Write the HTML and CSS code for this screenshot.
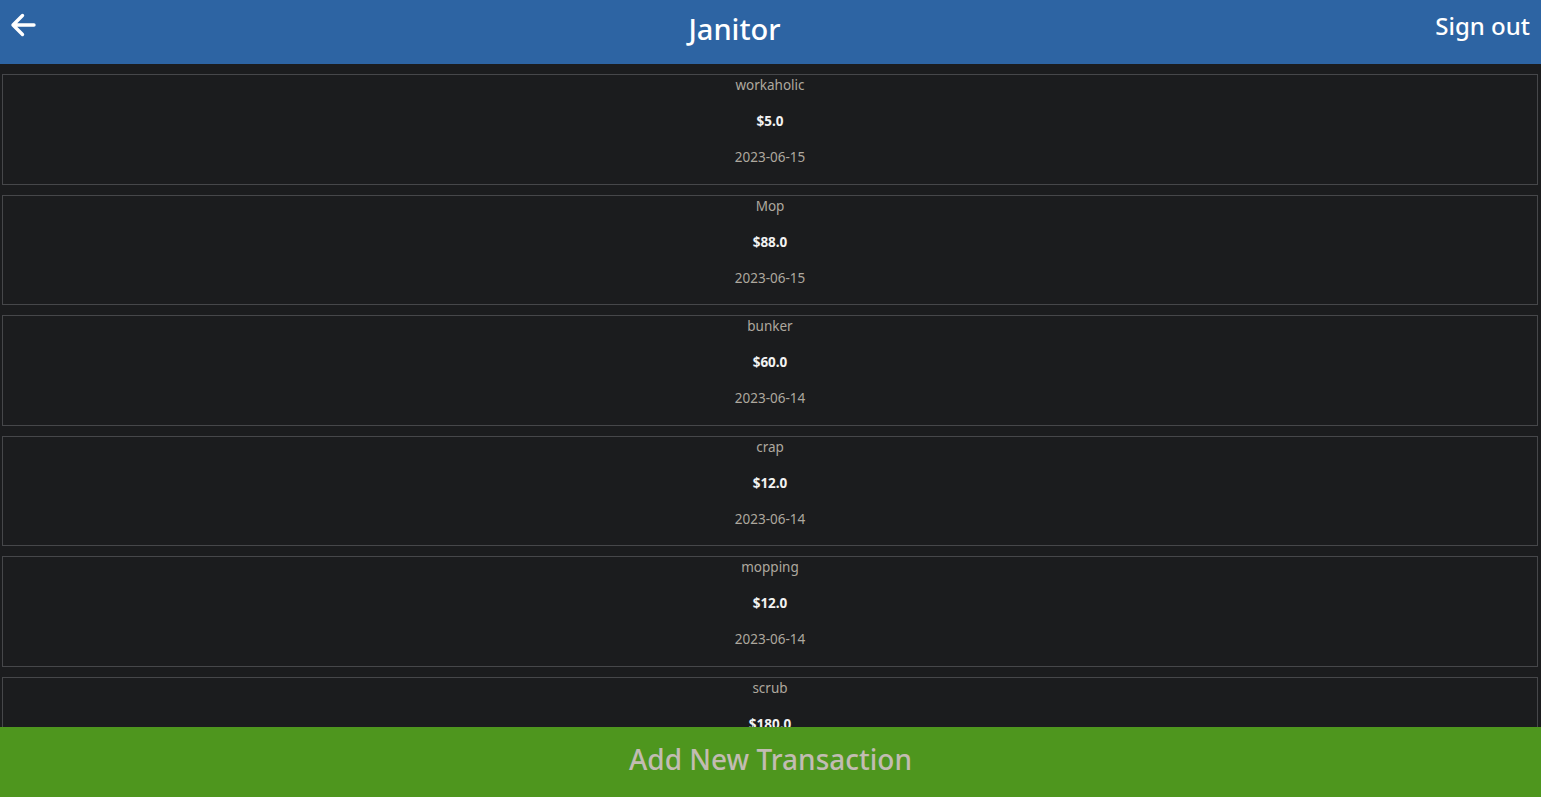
FILE: index.html
```html
<!DOCTYPE html>
<html lang="en">
<head>
<meta charset="utf-8">
<title>Janitor</title>
<link rel="stylesheet" href="styles.css">
</head>
<body>
<header class="topbar">
  <a class="back" href="#" aria-label="Back">
    <svg width="28" height="26" viewBox="0 0 28 26"><path d="M25 13H4M13.5 3.5L4 13l9.5 9.5" fill="none" stroke="#fff" stroke-width="3.4" stroke-linecap="round" stroke-linejoin="round"/></svg>
  </a>
  <h1 class="title">Janitor</h1>
  <a class="signout" href="#">Sign out</a>
</header>
<main class="list">
  <div class="card"><p class="label">workaholic</p><p class="amount">$5.0</p><p class="date">2023-06-15</p></div>
  <div class="card"><p class="label">Mop</p><p class="amount">$88.0</p><p class="date">2023-06-15</p></div>
  <div class="card"><p class="label">bunker</p><p class="amount">$60.0</p><p class="date">2023-06-14</p></div>
  <div class="card"><p class="label">crap</p><p class="amount">$12.0</p><p class="date">2023-06-14</p></div>
  <div class="card"><p class="label">mopping</p><p class="amount">$12.0</p><p class="date">2023-06-14</p></div>
  <div class="card"><p class="label">scrub</p><p class="amount">$180.0</p><p class="date">2023-06-13</p></div>
</main>
<footer class="addbar">Add New Transaction</footer>
</body>
</html>
```

FILE: styles.css
```css
html, body {
  margin: 0;
  padding: 0;
  height: 100%;
  overflow: hidden;
}
body {
  background: #1b1c1e;
  font-family: "Noto Sans", "Open Sans", "DejaVu Sans", sans-serif;
  color: #b3ada3;
}
.topbar {
  height: 64px;
  background: #2d64a3;
  display: flex;
  align-items: flex-start;
  color: #fff;
}
.back {
  display: flex;
  width: 46px;
  padding: 12px 0 0 9px;
  box-sizing: border-box;
}
.title {
  flex: 1;
  margin: 0;
  text-align: center;
  font-size: 29px;
  font-weight: 500;
  line-height: 30px;
  padding-top: 14px;
}
.signout {
  width: 118px;
  color: #fff;
  text-decoration: none;
  font-size: 24px;
  font-weight: 500;
  line-height: 28px;
  padding-top: 12px;
  text-align: right;
  padding-right: 11px;
  box-sizing: border-box;
}
.list {
  display: flex;
  flex-direction: column;
  padding: 0 3px 0 2px;
}
.card {
  margin-top: 10px;
  border: 1px solid #46474a;
  padding: 0 0 16.6px;
  display: flex;
  flex-direction: column;
  gap: 16px;
  text-align: center;
}
.card p {
  margin: 0;
  font-size: 13.5px;
  line-height: 20px;
}
.label, .date {
  color: #aea89e;
}
.amount {
  color: #f2f2f2;
  font-weight: 700;
}
.addbar {
  position: fixed;
  left: 0;
  right: 0;
  bottom: 0;
  height: 70px;
  background: #4e961e;
  color: #c2bcb2;
  font-size: 28px;
  font-weight: 500;
  display: flex;
  align-items: center;
  justify-content: center;
  padding-bottom: 6px;
  box-sizing: border-box;
}
```
